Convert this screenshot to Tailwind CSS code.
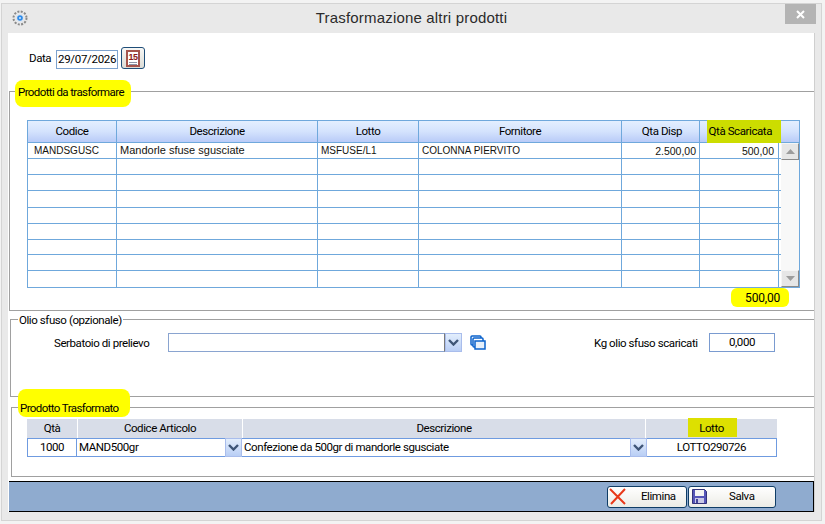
<!DOCTYPE html>
<html lang="it">
<head>
  <meta charset="UTF-8">
  <title>Trasformazione altri prodotti</title>
  <script src="https://cdn.jsdelivr.net/npm/@tailwindcss/browser@4"></script>
</head>
<body class="w-[825px] h-[524px] overflow-hidden bg-[#f3f3f3] font-['Roboto',sans-serif] text-[11.5px] tracking-[-0.42px] text-black">

  <!-- window -->
  <div class="ml-[1px] mt-[3px] w-[821px] h-[518px] border border-[#d4d4d4] bg-[#e9e9e9]">

    <!-- title bar -->
    <div class="relative flex h-[29px] items-center justify-center font-['Liberation_Sans',sans-serif] text-[15px] tracking-[0.18px] text-[#2b2b2b]">
      <svg class="absolute left-[9px] top-[5px]" width="18" height="18" viewBox="0 0 18 18">
        <circle cx="9" cy="9" r="6.5" fill="none" stroke="#8a8a8a" stroke-width="2" stroke-dasharray="2 1.4"/>
        <circle cx="9" cy="9" r="4.5" fill="#dfe6ee"/>
        <circle cx="9" cy="9" r="2.8" fill="#2f8be8"/>
        <circle cx="9" cy="9" r="1" fill="#cfe6ff"/>
      </svg>
      Trasformazione altri prodotti
      <div class="absolute left-[783px] top-0 flex h-[20px] w-[31px] items-center justify-center bg-[#b4b4b4]">
        <svg width="9" height="9" viewBox="0 0 9 9"><path d="M1 1l7 7M8 1l-7 7" stroke="#fff" stroke-width="2"/></svg>
      </div>
    </div>

    <!-- client area -->
    <div class="ml-[6px] flex h-[479px] w-[807px] flex-col border-r border-[#cfcfcf] bg-white pl-[1px]">

      <!-- data -->
      <div class="flex h-[58px] items-start pt-[17px]">
        <span class="ml-[20px] w-[27px]">Data</span>
        <div class="flex h-[19px] w-[62px] items-center border border-[#7da2ce] pl-[1px] tracking-[-0.3px]">29/07/2026</div>
        <button class="ml-[3px] -mt-[3px] flex h-[22px] w-[24px] items-center justify-center rounded-[3px] border border-[#1e4d78] bg-gradient-to-b from-[#f7f7f5] to-[#dcdcd6]">
          <svg width="14" height="17" viewBox="0 0 14 17">
            <rect x="1" y="1" width="12" height="15" fill="#fff" stroke="#a5544c" stroke-width="2"/>
            <text x="7" y="10" font-size="9" font-weight="700" text-anchor="middle" fill="#8b1a1a" font-family="Liberation Sans" letter-spacing="-0.6">15</text>
            <path d="M3 12.5h8M3 14.5h8" stroke="#8b93a5"/>
          </svg>
        </button>
      </div>

      <!-- prodotti da trasformare -->
      <div class="relative h-[220px] border border-r-0 border-[#a0a0a0] pl-[17px] pt-[28px]">
        <div class="absolute left-[5px] -top-[12px] h-[27px] w-[116px] rounded-[8px] bg-[#ffff00]"></div>
        <span class="absolute left-[7px] -top-[7px] px-[1px] leading-[14px] tracking-[-0.6px]">Prodotti da trasformare</span>

        <div class="relative h-[168px] w-[773px] border border-[#6fa8dc]">
          <div class="grid h-[22px] grid-cols-[89px_201px_101px_203px_78px_79px_1fr] border-b border-[#6fa8dc] bg-gradient-to-b from-[#e4efff] via-[#d4e3fd] to-[#b9cbf8] leading-[21px]">
            <div class="border-r border-[#6fa8dc] text-center">Codice</div>
            <div class="border-r border-[#6fa8dc] text-center">Descrizione</div>
            <div class="border-r border-[#6fa8dc] text-center">Lotto</div>
            <div class="border-r border-[#6fa8dc] text-center">Fornitore</div>
            <div class="border-r border-[#6fa8dc] pr-[17px] text-right">Qta Disp</div>
            <div class="relative whitespace-nowrap border-r border-[#6fa8dc] pr-[6px] text-right"><span class="absolute -right-[3px] -top-[1px] h-[23px] w-[74px] bg-[#ccdd00]"></span><span class="relative">Qtà Scaricata</span></div>
            <div></div>
          </div>
          <div class="grid h-[16px] grid-cols-[89px_201px_101px_203px_78px_79px] border-b border-[#6fa8dc] font-['Liberation_Sans',sans-serif] text-[10px] leading-[16px] tracking-normal text-[#14140f]">
            <div class="border-r border-[#6fa8dc] pl-[6px]">MANDSGUSC</div>
            <div class="border-r border-[#6fa8dc] pl-[3px] text-[11px] leading-[15px]">Mandorle sfuse sgusciate</div>
            <div class="border-r border-[#6fa8dc] pl-[3px]">MSFUSE/L1</div>
            <div class="border-r border-[#6fa8dc] pl-[3px]">COLONNA PIERVITO</div>
            <div class="border-r border-[#6fa8dc] pr-[3px] text-right text-[10.5px]">2.500,00</div>
            <div class="border-r border-[#6fa8dc] pr-[4px] text-right text-[10.5px]">500,00</div>
          </div>
          <div class="grid h-[16px] grid-cols-[89px_201px_101px_203px_78px_79px] border-b border-[#6fa8dc]"><div class="border-r border-[#6fa8dc]"></div><div class="border-r border-[#6fa8dc]"></div><div class="border-r border-[#6fa8dc]"></div><div class="border-r border-[#6fa8dc]"></div><div class="border-r border-[#6fa8dc]"></div><div class="border-r border-[#6fa8dc]"></div></div>
          <div class="grid h-[16px] grid-cols-[89px_201px_101px_203px_78px_79px] border-b border-[#6fa8dc]"><div class="border-r border-[#6fa8dc]"></div><div class="border-r border-[#6fa8dc]"></div><div class="border-r border-[#6fa8dc]"></div><div class="border-r border-[#6fa8dc]"></div><div class="border-r border-[#6fa8dc]"></div><div class="border-r border-[#6fa8dc]"></div></div>
          <div class="grid h-[17px] grid-cols-[89px_201px_101px_203px_78px_79px] border-b border-[#6fa8dc]"><div class="border-r border-[#6fa8dc]"></div><div class="border-r border-[#6fa8dc]"></div><div class="border-r border-[#6fa8dc]"></div><div class="border-r border-[#6fa8dc]"></div><div class="border-r border-[#6fa8dc]"></div><div class="border-r border-[#6fa8dc]"></div></div>
          <div class="grid h-[16px] grid-cols-[89px_201px_101px_203px_78px_79px] border-b border-[#6fa8dc]"><div class="border-r border-[#6fa8dc]"></div><div class="border-r border-[#6fa8dc]"></div><div class="border-r border-[#6fa8dc]"></div><div class="border-r border-[#6fa8dc]"></div><div class="border-r border-[#6fa8dc]"></div><div class="border-r border-[#6fa8dc]"></div></div>
          <div class="grid h-[16px] grid-cols-[89px_201px_101px_203px_78px_79px] border-b border-[#6fa8dc]"><div class="border-r border-[#6fa8dc]"></div><div class="border-r border-[#6fa8dc]"></div><div class="border-r border-[#6fa8dc]"></div><div class="border-r border-[#6fa8dc]"></div><div class="border-r border-[#6fa8dc]"></div><div class="border-r border-[#6fa8dc]"></div></div>
          <div class="grid h-[15px] grid-cols-[89px_201px_101px_203px_78px_79px] border-b border-[#6fa8dc]"><div class="border-r border-[#6fa8dc]"></div><div class="border-r border-[#6fa8dc]"></div><div class="border-r border-[#6fa8dc]"></div><div class="border-r border-[#6fa8dc]"></div><div class="border-r border-[#6fa8dc]"></div><div class="border-r border-[#6fa8dc]"></div></div>
          <div class="grid h-[16px] grid-cols-[89px_201px_101px_203px_78px_79px] border-b border-[#6fa8dc]"><div class="border-r border-[#6fa8dc]"></div><div class="border-r border-[#6fa8dc]"></div><div class="border-r border-[#6fa8dc]"></div><div class="border-r border-[#6fa8dc]"></div><div class="border-r border-[#6fa8dc]"></div><div class="border-r border-[#6fa8dc]"></div></div>
          <div class="grid h-[16px] grid-cols-[89px_201px_101px_203px_78px_79px]"><div class="border-r border-[#6fa8dc]"></div><div class="border-r border-[#6fa8dc]"></div><div class="border-r border-[#6fa8dc]"></div><div class="border-r border-[#6fa8dc]"></div><div class="border-r border-[#6fa8dc]"></div><div class="border-r border-[#6fa8dc]"></div></div>

          <!-- scrollbar -->
          <div class="absolute left-[753px] top-[22px] flex h-[144px] w-[18px] flex-col justify-between bg-[#f8f8f8]">
            <div class="flex h-[17px] items-center justify-center border border-[#f5f5f5] border-r-[#8a8a8a] border-b-[#8a8a8a] bg-[#e6e6e6]">
              <svg width="9" height="5" viewBox="0 0 9 5"><path d="M4.5 0L9 5H0z" fill="#9c9c9c"/></svg>
            </div>
            <div class="flex h-[17px] items-center justify-center border border-[#f5f5f5] border-r-[#8a8a8a] border-b-[#8a8a8a] bg-[#e6e6e6]">
              <svg width="9" height="5" viewBox="0 0 9 5"><path d="M0 0h9L4.5 5z" fill="#9c9c9c"/></svg>
            </div>
          </div>
        </div>

        <div class="relative ml-[704px] mt-0 flex h-[19px] w-[58px] items-center justify-end rounded-[6px] bg-[#ffff00] pr-[9px] text-[12px] tracking-[-0.2px]">500,00</div>
      </div>

      <!-- olio sfuso -->
      <div class="relative ml-[1px] mt-[8px] flex h-[78px] items-start border border-r-0 border-[#a0a0a0] pt-[13px]">
        <span class="absolute left-[7px] -top-[7px] bg-white px-[1px] leading-[14px]">Olio sfuso (opzionale)</span>
        <span class="ml-[43px] mt-[2px] w-[114px]">Serbatoio di prelievo</span>
        <div class="h-[19px] w-[277px] border border-[#8aa4d0] border-r-[#7a7a7a] bg-white"></div>
        <div class="flex h-[19px] w-[17px] items-center justify-center border border-[#a9bdec] bg-gradient-to-b from-[#e3eefc] to-[#b9cef5]">
          <svg width="11" height="7" viewBox="0 0 11 7"><path d="M1 1l4.5 4.5L10 1" fill="none" stroke="#3e5577" stroke-width="2.4"/></svg>
        </div>
        <svg class="ml-[8px] mt-[2px]" width="16" height="15" viewBox="0 0 16 15">
          <rect x="1" y="1" width="10" height="9" rx="1" fill="#fff" stroke="#0a62cc" stroke-width="1.5"/>
          <rect x="3" y="3" width="10" height="9" rx="1" fill="#fff" stroke="#0a62cc" stroke-width="1.5"/>
          <rect x="5" y="6" width="10" height="8" fill="#e6f0fb" stroke="#0a62cc" stroke-width="1.5"/>
        </svg>
        <span class="ml-[108px] mt-[2px] w-[115px] whitespace-nowrap">Kg olio sfuso scaricati</span>
        <div class="flex h-[19px] w-[66px] items-center justify-center border border-[#7a9bd0] bg-white">0,000</div>
      </div>

      <!-- prodotto trasformato -->
      <div class="relative ml-[2px] mt-[10px] h-[70px] border border-r-0 border-[#a0a0a0] pl-[15px] pt-[11px]">
        <div class="absolute left-[6px] -top-[19px] h-[28px] w-[112px] rounded-[8px] bg-[#ffff00]"></div>
        <span class="absolute left-[7px] -top-[7px] px-[1px] leading-[14px] tracking-[-0.6px]">Prodotto Trasformato</span>

        <div class="grid h-[19px] w-[750px] grid-cols-[50px_165px_1px_402px_1px_1fr] bg-[#d8dde8] leading-[19px]">
          <div class="text-center">Qtà</div>
          <div class="border-l border-white text-center">Codice Articolo</div>
          <div class="bg-white"></div>
          <div class="text-center">Descrizione</div>
          <div class="bg-white"></div>
          <div class="relative text-center"><span class="absolute left-[42px] -top-[1px] h-[19px] w-[49px] bg-[#dde000]"></span><span class="relative">Lotto</span></div>
        </div>
        <div class="flex h-[19px] w-[750px] items-center border border-[#6f9be0] leading-[17px]">
          <div class="w-[49px] border-r border-[#6f9be0] text-center">1000</div>
          <div class="flex h-full w-[165px] items-center justify-between pl-[2px]">
            MAND500gr
            <span class="flex h-[19px] w-[17px] shrink-0 items-center justify-center border border-[#a9bdec] bg-gradient-to-b from-[#e3eefc] to-[#b9cef5]"><svg width="11" height="7" viewBox="0 0 11 7"><path d="M1 1l4.5 4.5L10 1" fill="none" stroke="#3e5577" stroke-width="2.4"/></svg></span>
          </div>
          <div class="flex h-full w-[405px] items-center justify-between pl-[2px]">
            Confezione da 500gr di mandorle sgusciate
            <span class="flex h-[19px] w-[17px] shrink-0 items-center justify-center border border-[#a9bdec] bg-gradient-to-b from-[#e3eefc] to-[#b9cef5]"><svg width="11" height="7" viewBox="0 0 11 7"><path d="M1 1l4.5 4.5L10 1" fill="none" stroke="#3e5577" stroke-width="2.4"/></svg></span>
          </div>
          <div class="flex-1 text-center">LOTTO290726</div>
        </div>
      </div>

      <!-- footer -->
      <div class="mt-[4px] flex h-[31px] items-center justify-end gap-[1px] border-y border-r border-black bg-[#8fabcf] pr-[37px]">
        <button class="flex h-[22px] w-[80px] items-center rounded-[3px] border border-[#0f3d66] bg-gradient-to-b from-white to-[#ecece6] pl-[1px]">
          <svg width="18" height="17" viewBox="0 0 18 17"><path d="M1 1l15 15M16 1L2 16" stroke="#e8391a" stroke-width="2"/></svg>
          <span class="ml-[14px]">Elimina</span>
        </button>
        <button class="flex h-[22px] w-[88px] items-center rounded-[3px] border border-[#0f3d66] bg-gradient-to-b from-white to-[#ecece6] pl-[2px]">
          <svg width="17" height="17" viewBox="0 0 17 17">
            <path d="M1.5 1.5h12l2 2v12h-14z" fill="#5555b8" stroke="#33337a"/>
            <rect x="4" y="2" width="9" height="6" fill="#f3f3f3"/>
            <rect x="4" y="10" width="9" height="5" fill="#c9c9e6"/>
            <rect x="5" y="11" width="2" height="4" fill="#44449a"/>
          </svg>
          <span class="ml-[21px]">Salva</span>
        </button>
      </div>
    </div>
  </div>
</body>
</html>
